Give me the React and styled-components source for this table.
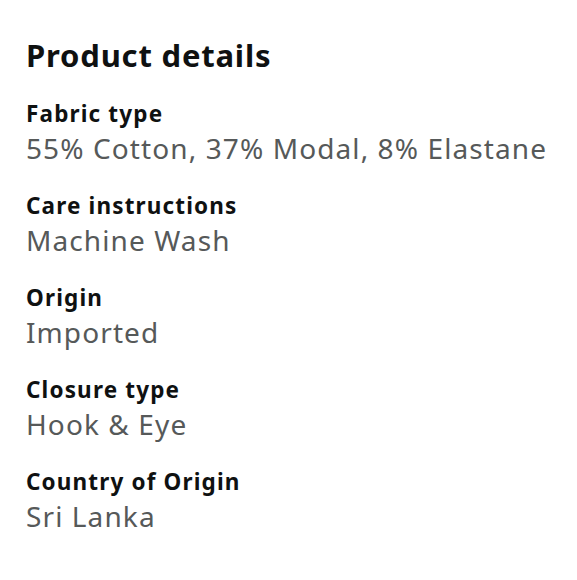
import styled, { createGlobalStyle } from 'styled-components';

const Global = createGlobalStyle`
  html, body {
    margin: 0;
    padding: 0;
    background: #ffffff;
  }
  body {
    font-family: 'Noto Sans', 'Open Sans', sans-serif;
    overflow: hidden;
  }
`;

const Page = styled.div`
  padding: 30px 26px 0;
  height: 580px;
  box-sizing: border-box;
  overflow: hidden;
`;

const Heading = styled.h2`
  margin: 0 0 15px;
  font-size: 31px;
  line-height: 50px;
  font-weight: 700;
  color: #0f1111;
  letter-spacing: 0.8px;
`;

const List = styled.dl`
  margin: 0;
  display: flex;
  flex-direction: column;
  gap: 24px;
`;

const Item = styled.div`
  display: flex;
  flex-direction: column;
`;

const Label = styled.dt`
  font-size: 22.5px;
  line-height: 38px;
  font-weight: 700;
  color: #0f1111;
  letter-spacing: 1.15px;
`;

const Value = styled.dd`
  margin: 0;
  font-size: 28px;
  line-height: 30px;
  color: #565959;
  letter-spacing: 1.1px;
`;

const NextHeading = styled.h2`
  margin: 40px 0 0;
  font-size: 31px;
  line-height: 40px;
  font-weight: 700;
  color: #0f1111;
  letter-spacing: 0.8px;
`;

const details = [
  ['Fabric type', '55% Cotton, 37% Modal, 8% Elastane'],
  ['Care instructions', 'Machine Wash'],
  ['Origin', 'Imported'],
  ['Closure type', 'Hook & Eye'],
  ['Country of Origin', 'Sri Lanka'],
];

export default function App() {
  return (
    <>
      <Global />
      <Page>
        <Heading>Product details</Heading>
        <List>
          {details.map(([label, value]) => (
            <Item key={label}>
              <Label>{label}</Label>
              <Value>{value}</Value>
            </Item>
          ))}
        </List>
        <NextHeading>About this item</NextHeading>
      </Page>
    </>
  );
}
